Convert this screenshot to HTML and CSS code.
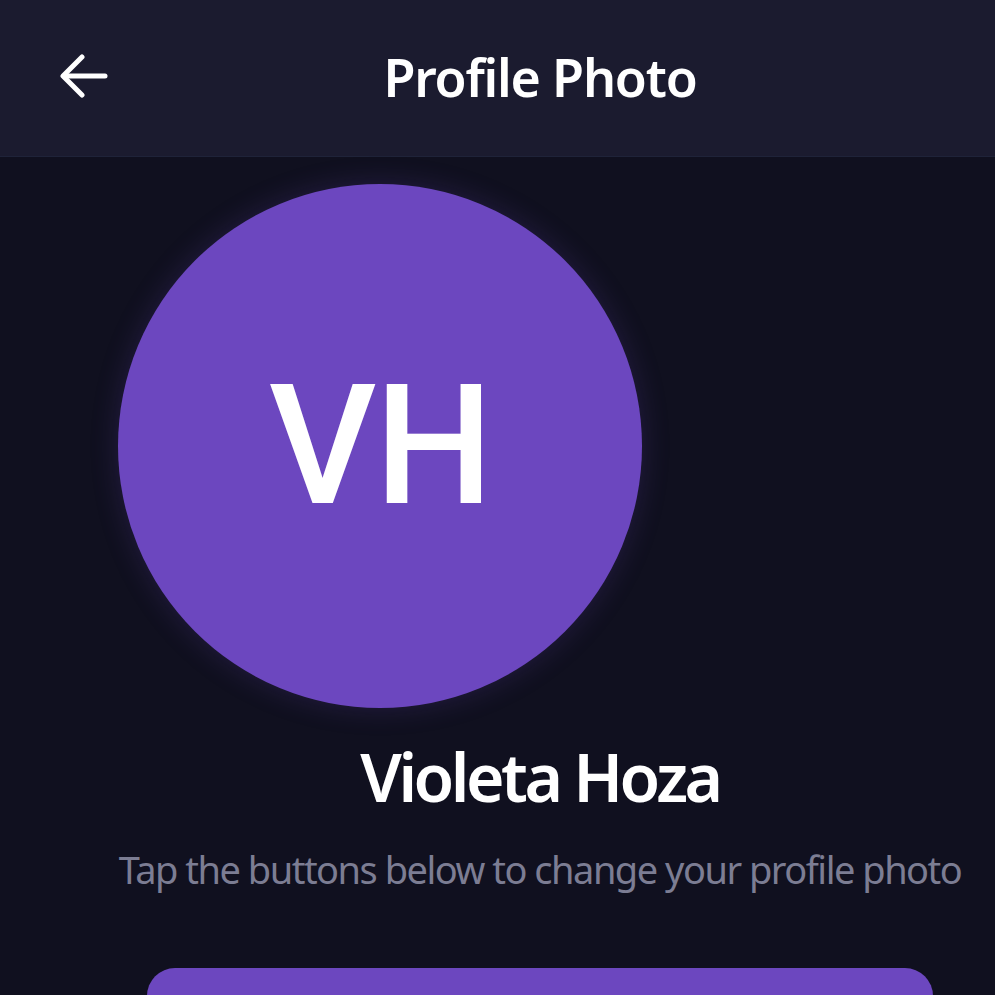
FILE: index.html
```html
<!DOCTYPE html>
<html lang="en">
<head>
<meta charset="utf-8">
<title>Profile Photo</title>
<link rel="stylesheet" href="styles.css">
</head>
<body>
<div class="screen">
  <header class="topbar">
    <button class="back" aria-label="Back">
      <svg width="48" height="48" viewBox="0 0 48 48" fill="none" stroke="#ffffff" stroke-width="5" stroke-linecap="round" stroke-linejoin="round">
        <path d="M45 22H4"/>
        <path d="M22 3L3 22L22 41"/>
      </svg>
    </button>
    <h1 class="title">Profile Photo</h1>
    <span class="spacer"></span>
  </header>
  <main class="content">
    <div class="avatar">VH</div>
    <h2 class="name">Violeta Hoza</h2>
    <p class="hint">Tap the buttons below to change your profile photo</p>
    <button class="primary"></button>
  </main>
</div>
</body>
</html>
```
FILE: styles.css
```css
html, body {
  margin: 0;
  padding: 0;
  background: #10101f;
  overflow: hidden;
}
.screen {
  width: 1080px;
  min-height: 995px;
  background: #10101f;
  font-family: "Noto Sans", "Open Sans", sans-serif;
  color: #ffffff;
}
.topbar {
  height: 156px;
  background: #1b1b2f;
  border-bottom: 1px solid #1f2339;
  display: grid;
  grid-template-columns: 1fr auto 1fr;
  align-items: center;
}
.back {
  justify-self: start;
  margin-left: 60px;
  padding: 0;
  border: 0;
  background: none;
  width: 48px;
  height: 48px;
  display: flex;
}
.title {
  margin: 0;
  font-size: 52px;
  font-weight: 600;
  line-height: 1;
  letter-spacing: -1.2px;
  padding-bottom: 2px;
}
.content {
  display: flex;
  flex-direction: column;
  align-items: center;
}
.avatar {
  align-self: flex-start;
  margin: 27px 0 0 118px;
  width: 524px;
  height: 524px;
  border-radius: 50%;
  background: #6c47bf;
  box-shadow: 0 0 28px rgba(108, 71, 191, 0.22);
  display: flex;
  align-items: center;
  justify-content: center;
  font-family: Roboto, "Noto Sans", sans-serif;
  font-size: 167px;
  font-weight: 500;
  line-height: 1;
  letter-spacing: -2px;
}
.name {
  margin: 29px 0 0;
  font-size: 66px;
  font-weight: 600;
  line-height: 1.2;
  letter-spacing: -3.5px;
}
.hint {
  margin: 29px 0 0;
  font-size: 38px;
  line-height: 1.3;
  letter-spacing: -1.5px;
  color: #7c7d93;
}
.primary {
  margin-top: 73px;
  width: 786px;
  height: 120px;
  border: 0;
  border-radius: 28px;
  background: #6c47bf;
}
```
